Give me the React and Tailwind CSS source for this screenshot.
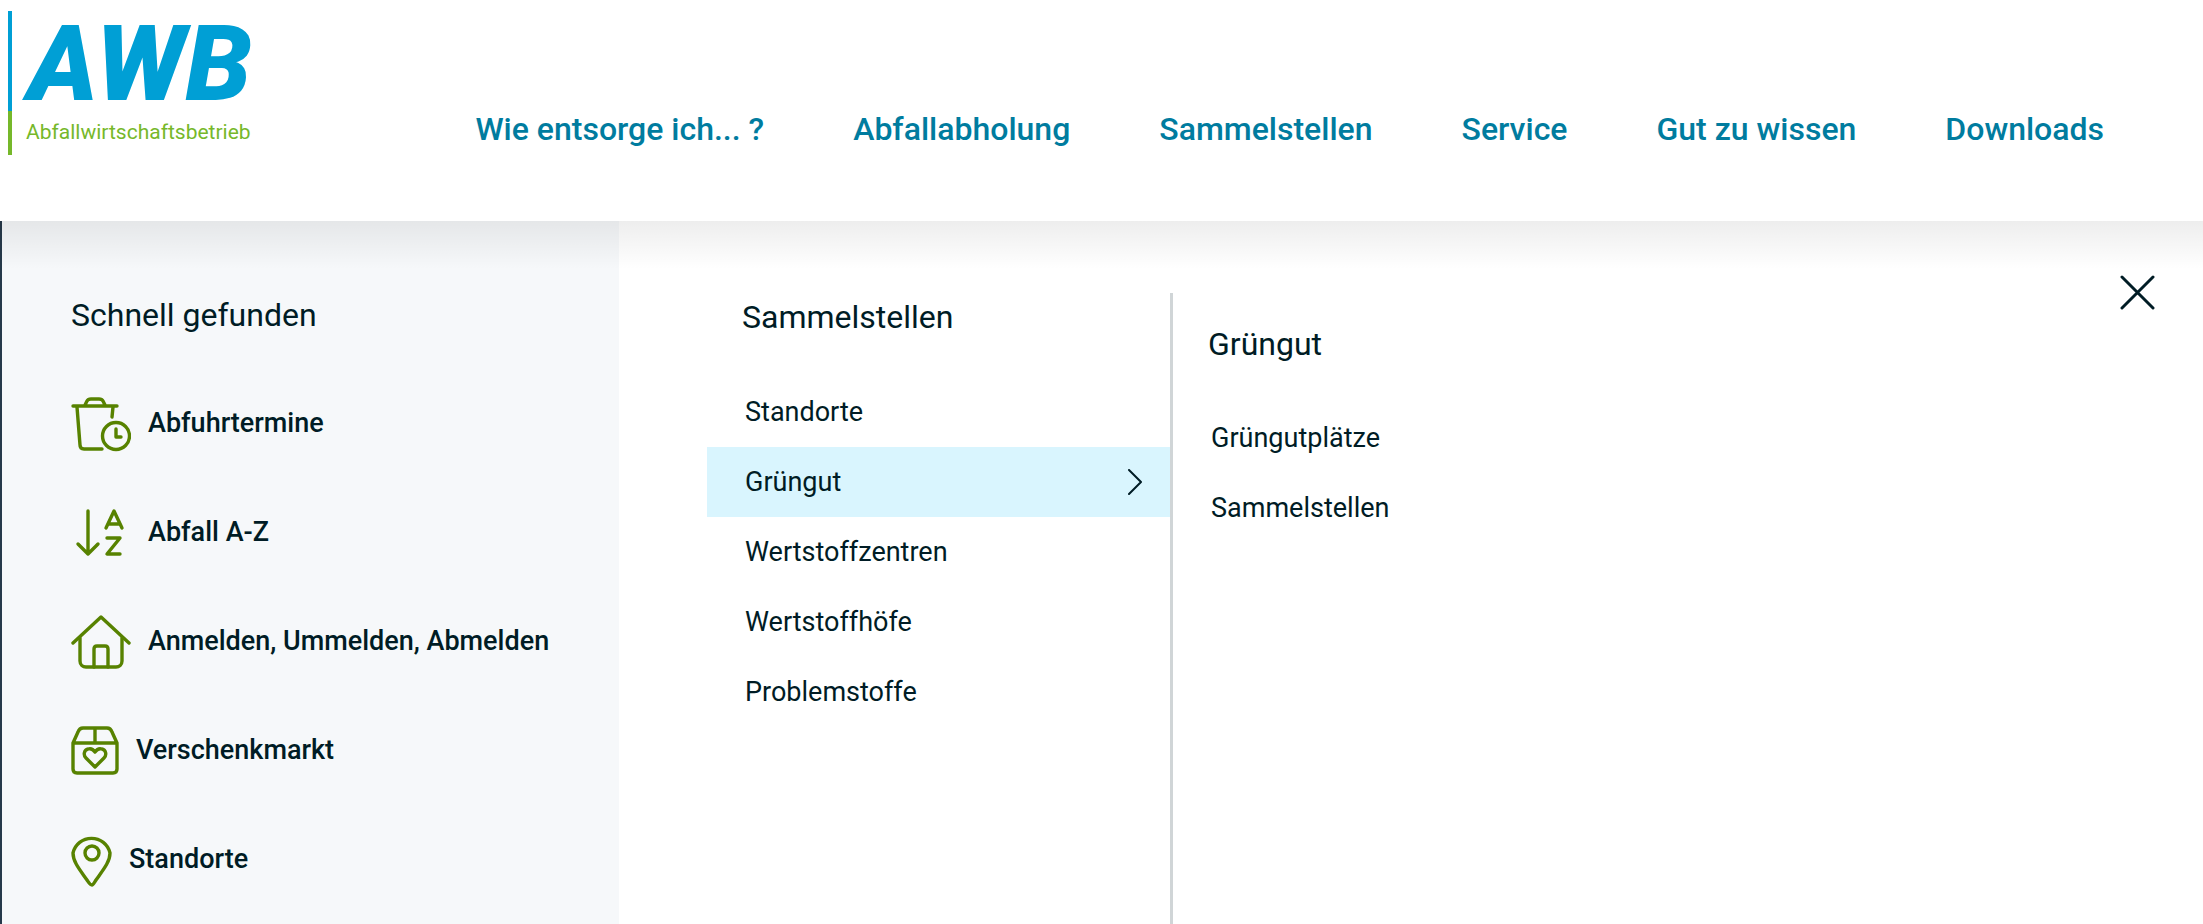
import React from 'react'

const navLinks = ['Wie entsorge ich... ?', 'Abfallabholung', 'Sammelstellen', 'Service', 'Gut zu wissen', 'Downloads'];

const stations = ['Standorte', 'Grüngut', 'Wertstoffzentren', 'Wertstoffhöfe', 'Problemstoffe'];

const subLinks = ['Grüngutplätze', 'Sammelstellen'];

const iconProps = {
    fill: 'none',
    stroke: 'currentColor',
    strokeWidth: 3.4,
    strokeLinecap: 'round',
    strokeLinejoin: 'round',
    'aria-hidden': true,
    className: 'shrink-0 text-[#578200]',
};

function BinIcon() {
    return (
        <svg width="60" height="56" viewBox="0 0 60 56" {...iconProps}>
            <path d="M2 10h44M14 9l2-4c1-2 2-2 4-2h8c2 0 3 0 4 2l2 4" />
            <path d="M6 11l3 38c0 3 2 4 4 4h18M42 11l-1 10" />
            <circle cx="45" cy="40" r="13.5" />
            <path d="M45 33v8h5" />
        </svg>
    )
}

function SortIcon() {
    return (
        <svg width="60" height="56" viewBox="0 0 60 56" {...iconProps}>
            <path d="M17 6v43M7 39l10 10 10-10" />
            <path d="M35 23l8-17 8 17M38 19h10M36 33h13L36 49h13" />
        </svg>
    )
}

function HouseIcon() {
    return (
        <svg width="60" height="56" viewBox="0 0 60 56" {...iconProps}>
            <path d="M2 29L30 3l28 26" />
            <path d="M9 24v23c0 4 3 6 6 6h30c3 0 6-2 6-6V24" />
            <path d="M23 53V35c0-2 1-3 3-3h8c2 0 3 1 3 3v18" />
        </svg>
    )
}

function BoxIcon() {
    return (
        <svg width="48" height="56" viewBox="0 0 48 56" {...iconProps}>
            <path d="M2 20l5-11c1-3 2-4 5-4h24c3 0 4 1 5 4l5 11v26c0 3-2 4-4 4H6c-2 0-4-1-4-4zM2 20h44M24 5v14" />
            <path d="M24 44l-9-9c-3-3-2-8 2-9 3-1 5 0 7 3 2-3 4-4 7-3 4 1 5 6 2 9z" />
        </svg>
    )
}

function PinIcon() {
    return (
        <svg width="41" height="56" viewBox="0 0 41 56" {...iconProps}>
            <path d="M21 53c-2 0-3-2-5-5C9 38 2 30 2 21a19 19 0 0 1 37 0c0 9-7 17-14 27-2 3-3 5-4 5z" />
            <circle cx="21" cy="21" r="7" />
        </svg>
    )
}

const quickLinks = [
    { label: 'Abfuhrtermine', icon: <BinIcon /> },
    { label: 'Abfall A-Z', icon: <SortIcon /> },
    { label: 'Anmelden, Ummelden, Abmelden', icon: <HouseIcon /> },
    { label: 'Verschenkmarkt', icon: <BoxIcon /> },
    { label: 'Standorte', icon: <PinIcon /> },
];

function Logo() {
    return (
        <a href="#" aria-label="AWB Abfallwirtschaftsbetrieb" className="shrink-0">
            <svg width="256" height="146" viewBox="0 0 256 146" className="overflow-visible">
                <rect x="0" y="0" width="4" height="100" fill="#009fd5" />
                <rect x="0" y="100" width="4" height="44" fill="#76b82a" />
                <text x="20" y="89" fontSize="106" fontWeight="900" fontStyle="italic" fill="#009fd5">AWB</text>
                <text x="18" y="128" fontSize="21" fill="#76b82a">Abfallwirtschaftsbetrieb</text>
            </svg>
        </a>
    )
}

function App() {
    return (
        <div className="min-h-screen flex flex-col bg-white font-[Roboto,sans-serif] text-[#001c25]">
            <header className="h-[221px] shrink-0 flex items-start justify-between pl-2 pr-[99px] pt-[11px]">
                <Logo />
                <nav className="flex gap-[89px] pt-[98px]">
                    {navLinks.map((link) => (
                        <a key={link} href="#" className="text-[32px] leading-10 font-medium text-[#007c9f] whitespace-nowrap">{link}</a>
                    ))}
                </nav>
            </header>

            <div className="relative flex-1 flex">
                {/* header shadow falling on the menu */}
                <div className="absolute inset-x-0 top-0 h-12 bg-linear-to-b from-black/7 to-transparent pointer-events-none" />

                <aside className="w-[28.1%] shrink-0 bg-[#f6f8fa] border-l-2 border-[#26394a] pl-[69px] pt-[74px]">
                    <h2 className="text-[32px] leading-10">Schnell gefunden</h2>
                    <ul className="mt-[34px]">
                        {quickLinks.map((item) => (
                            <li key={item.label}>
                                <a href="#" className="h-[109px] flex items-center gap-[17px] text-[27px] font-medium whitespace-nowrap">
                                    {item.icon}
                                    {item.label}
                                </a>
                            </li>
                        ))}
                    </ul>
                </aside>

                <main className="flex-1 flex pl-[88px] pr-12">
                    <section className="w-[466px] mt-[72px] border-r-3 border-[#d0d5d7]">
                        <h2 className="pl-[35px] pt-1 text-[32px] leading-10">Sammelstellen</h2>
                        <ul className="mt-10">
                            {stations.map((name) => (
                                <li key={name}>
                                    <a href="#" className={`h-[70px] flex items-center justify-between pl-[38px] pr-7 text-[27px] ${name === 'Grüngut' ? 'bg-[#d9f5fe]' : ''}`}>
                                        {name}
                                        {name === 'Grüngut' && (
                                            <svg width="14" height="26" viewBox="0 0 14 26" fill="none" stroke="currentColor" strokeWidth="2" strokeLinecap="round" strokeLinejoin="round" aria-hidden="true">
                                                <path d="M1 1l12 12L1 25" />
                                            </svg>
                                        )}
                                    </a>
                                </li>
                            ))}
                        </ul>
                    </section>

                    <section className="flex-1 pl-[35px] pt-[103px]">
                        <h2 className="text-[32px] leading-10">Grüngut</h2>
                        <ul className="mt-[39px]">
                            {subLinks.map((name) => (
                                <li key={name}>
                                    <a href="#" className="h-[70px] flex items-center pl-[3px] text-[27px]">{name}</a>
                                </li>
                            ))}
                        </ul>
                    </section>

                    <button type="button" aria-label="Schließen" className="self-start mt-[54px]">
                        <svg width="35" height="35" viewBox="0 0 35 35" stroke="currentColor" strokeWidth="3" strokeLinecap="round" aria-hidden="true">
                            <path d="M2 2l31 31M33 2L2 33" />
                        </svg>
                    </button>
                </main>
            </div>
        </div>
    )
}

export default App
